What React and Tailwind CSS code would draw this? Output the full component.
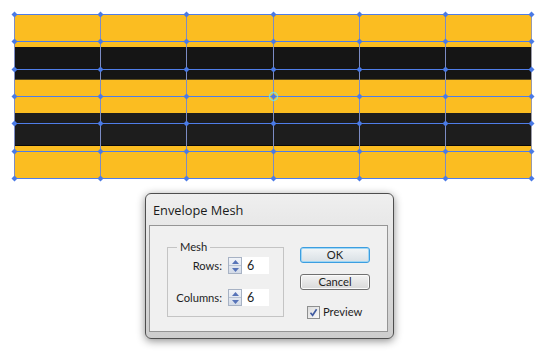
import React from "react";

const cols = [14.5, 100.5, 186.5, 273.5, 359.5, 445.5, 531.5];
const rows = [14.5, 41.5, 69.5, 96.5, 123.5, 151.5, 178.5];

function MeshArt() {
  return (
    <svg width="550" height="193" className="block">
      <rect x="14" y="14" width="518" height="165" fill="#fbbd21" />
      <rect x="14" y="47" width="518" height="33" fill="#151515" />
      <rect x="14" y="113" width="518" height="33" fill="#1d1d1d" />
      <line x1="14" y1="79.5" x2="532" y2="79.5" stroke="#5a4a1a" strokeWidth="1" />
      <line x1="14" y1="145.5" x2="532" y2="145.5" stroke="#0a0a0a" strokeWidth="1" />
      {cols.map((x, i) => (
        <line key={"c" + i} x1={x} y1="14.5" x2={x} y2="178.5" stroke={i === 6 ? "#9a9aa8" : "#7c8cc4"} strokeWidth="1" />
      ))}
      {rows.map((y, i) => (
        <line key={"r" + i} x1="14.5" y1={y} x2="531.5" y2={y} stroke="#4f7de8" strokeWidth="1" />
      ))}
      <circle cx="273.5" cy="96.5" r="4" fill="none" stroke="#6fe6f2" strokeWidth="1.5" opacity="0.8" />
      {rows.map((y, ri) =>
        cols.map((x, ci) => (
          <polygon
            key={ri + "-" + ci}
            points={`${x},${y - 3} ${x + 3},${y} ${x},${y + 3} ${x - 3},${y}`}
            fill="#4a7ae6"
          />
        ))
      )}
    </svg>
  );
}

function Spinner() {
  return (
    <div className="w-[14px] h-[17px] border border-[#a7b2c4] bg-gradient-to-b from-[#f1f4f9] to-[#d3dbe8] flex flex-col">
      <div className="flex-1 flex items-center justify-center border-b border-[#b9c3d3]">
        <svg width="7" height="4"><polygon points="3.5,0 7,4 0,4" fill="#5673b8" /></svg>
      </div>
      <div className="flex-1 flex items-center justify-center">
        <svg width="7" height="4"><polygon points="0,0 7,0 3.5,4" fill="#5673b8" /></svg>
      </div>
    </div>
  );
}

function Field({ label }) {
  return (
    <div className="flex items-center h-[17px]">
      <div className="w-[55px] text-right pr-[1px]">{label}</div>
      <div className="ml-[5px] flex">
        <Spinner />
        <div className="w-[27px] h-[17px] bg-white flex items-center pl-[5px] text-[12.5px]">6</div>
      </div>
    </div>
  );
}

export default function App() {
  return (
    <div className="w-[550px] h-[357px] bg-white overflow-hidden font-['Lato',sans-serif] text-[#1e1e1e]">
      <MeshArt />
      <div className="ml-[145px] w-[249px] h-[146px] rounded-[6px] border border-[#4e4e4e] bg-gradient-to-b from-[#efefef] via-[#dedede] to-[#cdcdcd] shadow-[0_2px_8px_rgba(0,0,0,0.45)] flex flex-col pl-[3px] pr-[5px] pb-[6px]">
        <div className="h-[31px] pl-[4px] flex items-center font-['Open_Sans',sans-serif] text-[12.8px] text-[#1a1a1a] leading-none pt-[2px]">
          Envelope Mesh
        </div>
        <div className="flex-1 border border-[#959595] bg-[#f0f0f0] flex items-start pl-[17px] text-[11.2px] leading-[14px]">
          <fieldset className="mt-[14px] w-[117px] h-[77px] border border-[#c4c4c4] px-0 pt-[3px] pb-[10px] flex flex-col gap-[15px]">
            <legend className="ml-[9px] px-[3px] leading-[14px]">Mesh</legend>
            <Field label="Rows:" />
            <Field label="Columns:" />
          </fieldset>
          <div className="ml-[16px] mt-[21px] flex flex-col">
            <div className="w-[70px] h-[16px] rounded-[3px] border border-[#3c9ee0] bg-gradient-to-b from-[#f2f5f7] to-[#d9e0e5] shadow-[inset_0_0_0_1px_#9fd6f4] flex items-center justify-center">
              OK
            </div>
            <div className="mt-[11px] w-[70px] h-[16px] rounded-[3px] border border-[#707070] bg-gradient-to-b from-[#f3f3f3] to-[#d9d9d9] shadow-[inset_0_0_0_1px_#fbfbfb] flex items-center justify-center">
              Cancel
            </div>
            <div className="mt-[15px] ml-[7px] flex items-center">
              <div className="w-[13px] h-[13px] border border-[#8e8f8f] bg-gradient-to-br from-[#dcdcdc] to-[#fafafa] flex items-center justify-center">
                <svg width="9" height="9" viewBox="0 0 9 9">
                  <path d="M1.5 4.8 L3.6 7.3 L7.6 1.2" fill="none" stroke="#3f5aa0" strokeWidth="1.6" />
                </svg>
              </div>
              <span className="ml-[3px]">Preview</span>
            </div>
          </div>
        </div>
      </div>
    </div>
  );
}
